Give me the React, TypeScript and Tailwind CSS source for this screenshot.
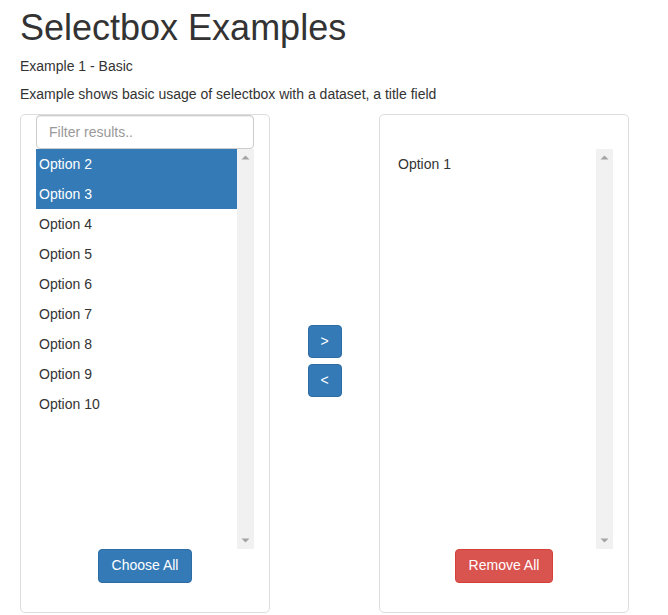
import { useState } from 'react';

const font = { fontFamily: '"Liberation Sans", Arial, sans-serif' };

function Scrollbar() {
  return (
    <div className="w-[17px] h-full bg-[#f1f1f1] flex flex-col items-center justify-between py-[6px]">
      <svg width="9" height="5" viewBox="0 0 9 5">
        <path d="M0.5 4.5 L4.5 0.5 L8.5 4.5 Z" fill="#a3a3a3" />
      </svg>
      <svg width="9" height="5" viewBox="0 0 9 5">
        <path d="M0.5 0.5 L4.5 4.5 L8.5 0.5 Z" fill="#a3a3a3" />
      </svg>
    </div>
  );
}

function OptionList({ items, selected }: { items: string[]; selected: string[] }) {
  return (
    <div className="flex h-[400px]">
      <div className="flex-1">
        {items.map((o) => (
          <div
            key={o}
            className={
              'h-[30px] leading-[30px] pl-[3px] text-[14px] ' +
              (selected.includes(o) ? 'bg-[#337ab7] text-white' : 'text-[#333]')
            }
          >
            {o}
          </div>
        ))}
      </div>
      <Scrollbar />
    </div>
  );
}

export default function App() {
  const [left] = useState(['Option 2', 'Option 3', 'Option 4', 'Option 5', 'Option 6', 'Option 7', 'Option 8', 'Option 9', 'Option 10']);
  const [right] = useState(['Option 1']);
  const selected = ['Option 2', 'Option 3'];

  return (
    <div className="bg-white text-[#333] px-[20px] pt-[8px] w-[668px] h-[615px]" style={font}>
      <h1 className="text-[36px] leading-[39.6px] font-normal">Selectbox Examples</h1>
      <p className="text-[14px] leading-[20px] mt-[8px]">Example 1 - Basic</p>
      <p className="text-[14px] leading-[20px] mt-[8px]">Example shows basic usage of selectbox with a dataset, a title field</p>

      <div className="flex mt-[10px]">
        <div className="w-[250px] h-[499px] border border-[#ddd] rounded-[5px] px-[15px]">
          <input
            className="w-full h-[34px] border border-[#ccc] rounded-[4px] px-[12px] text-[14px] text-[#555] placeholder:text-[#999] outline-none shadow-[inset_0_1px_1px_rgba(0,0,0,0.075)]"
            placeholder="Filter results.."
            style={font}
          />
          <OptionList items={left} selected={selected} />
          <div className="flex justify-center">
            <button className="h-[34px] px-[13px] bg-[#337ab7] border border-[#2e6da4] rounded-[4px] text-white text-[14px]" style={font}>
              Choose All
            </button>
          </div>
        </div>

        <div className="w-[109px] flex flex-col items-center justify-center gap-[6px] pb-[5px]">
          <button className="w-[34px] h-[33px] bg-[#337ab7] border border-[#2e6da4] rounded-[4px] text-white text-[14px]" style={font}>
            &gt;
          </button>
          <button className="w-[34px] h-[33px] bg-[#337ab7] border border-[#2e6da4] rounded-[4px] text-white text-[14px]" style={font}>
            &lt;
          </button>
        </div>

        <div className="w-[250px] h-[499px] border border-[#ddd] rounded-[5px] px-[15px]">
          <div className="h-[34px]" />
          <OptionList items={right} selected={[]} />
          <div className="flex justify-center">
            <button className="h-[34px] px-[13px] bg-[#d9534f] border border-[#d43f3a] rounded-[4px] text-white text-[14px]" style={font}>
              Remove All
            </button>
          </div>
        </div>
      </div>
    </div>
  );
}
